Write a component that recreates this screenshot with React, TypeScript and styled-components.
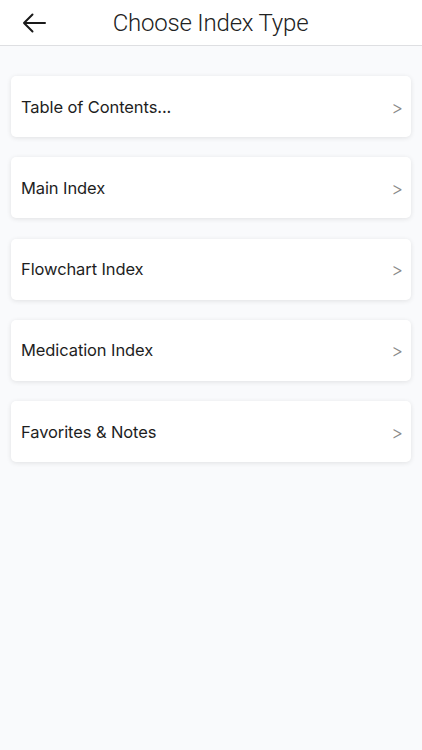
import React from "react";
import styled, { createGlobalStyle } from "styled-components";

const GlobalStyle = createGlobalStyle`
  html, body {
    margin: 0;
    padding: 0;
    background: #f9fafc;
  }
  body {
    font-family: "Inter", "Liberation Sans", Arial, sans-serif;
  }
`;

const Page = styled.div`
  width: 422px;
  min-height: 750px;
  background: #f9fafc;
`;

const TopBar = styled.header`
  height: 45px;
  background: #ffffff;
  border-bottom: 1px solid #dedfe2;
  display: flex;
  align-items: center;
`;

const BackButton = styled.button`
  border: none;
  background: transparent;
  padding: 0;
  margin-left: 21px;
  width: 26px;
  height: 26px;
  display: flex;
  align-items: center;
  justify-content: center;
  cursor: pointer;
`;

const Title = styled.h1`
  flex: 1;
  margin: 0 0 0 40px;
  padding-right: 88px;
  font-family: "Roboto", "Liberation Sans", sans-serif;
  font-weight: 300;
  font-size: 24px;
  letter-spacing: -0.2px;
  color: #222222;
  text-align: center;
`;

const List = styled.div`
  display: flex;
  flex-direction: column;
  gap: 20.3px;
  padding: 30px 11px 0 11px;
`;

const Card = styled.div`
  height: 61px;
  background: #ffffff;
  border-radius: 5px;
  box-shadow: 0 1px 5px rgba(0, 0, 0, 0.1);
  display: flex;
  align-items: center;
  padding: 0 8px 0 10px;
  cursor: pointer;
`;

const Label = styled.span`
  flex: 1;
  font-family: "Inter", "Liberation Sans", sans-serif;
  font-size: 16.5px;
  color: #1e1e1e;
  letter-spacing: -0.1px;
`;

const Chevron = styled.span`
  font-family: "Inter", "Liberation Sans", sans-serif;
  font-weight: 300;
  font-size: 18px;
  color: #8a8a8a;
  margin-top: 1px;
`;

const items = [
  "Table of Contents...",
  "Main Index",
  "Flowchart Index",
  "Medication Index",
  "Favorites & Notes",
];

export default function App() {
  return (
    <Page>
      <GlobalStyle />
      <TopBar>
        <BackButton aria-label="Back">
          <svg width="24" height="20" viewBox="0 0 24 20" fill="none">
            <path
              d="M23 10H2M10.5 1.5L2 10l8.5 8.5"
              stroke="#1a1a1a"
              strokeWidth="2"
              strokeLinecap="round"
              strokeLinejoin="round"
            />
          </svg>
        </BackButton>
        <Title>Choose Index Type</Title>
      </TopBar>
      <List>
        {items.map((item) => (
          <Card key={item}>
            <Label>{item}</Label>
            <Chevron>&gt;</Chevron>
          </Card>
        ))}
      </List>
    </Page>
  );
}
